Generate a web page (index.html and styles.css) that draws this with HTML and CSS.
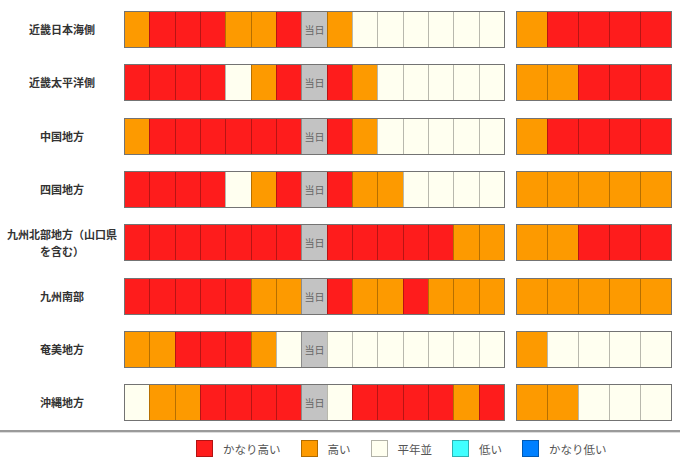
FILE: index.html
```html
<!DOCTYPE html>
<html lang="ja">
<head>
<meta charset="utf-8">
<link rel="stylesheet" href="styles.css">
</head>
<body>
<div class="rows">
  <div class="row">
    <div class="label">近畿日本海側</div>
    <div class="bar main"><i class="o"></i><i class="r"></i><i class="r"></i><i class="r"></i><i class="o"></i><i class="o"></i><i class="r"></i><i class="t">当日</i><i class="o"></i><i class="w"></i><i class="w"></i><i class="w"></i><i class="w"></i><i class="w"></i><i class="w"></i></div>
    <div class="bar side"><i class="o"></i><i class="r"></i><i class="r"></i><i class="r"></i><i class="r"></i></div>
  </div>
  <div class="row">
    <div class="label">近畿太平洋側</div>
    <div class="bar main"><i class="r"></i><i class="r"></i><i class="r"></i><i class="r"></i><i class="w"></i><i class="o"></i><i class="r"></i><i class="t">当日</i><i class="r"></i><i class="o"></i><i class="w"></i><i class="w"></i><i class="w"></i><i class="w"></i><i class="w"></i></div>
    <div class="bar side"><i class="o"></i><i class="o"></i><i class="r"></i><i class="r"></i><i class="r"></i></div>
  </div>
  <div class="row">
    <div class="label">中国地方</div>
    <div class="bar main"><i class="o"></i><i class="r"></i><i class="r"></i><i class="r"></i><i class="r"></i><i class="r"></i><i class="r"></i><i class="t">当日</i><i class="r"></i><i class="o"></i><i class="w"></i><i class="w"></i><i class="w"></i><i class="w"></i><i class="w"></i></div>
    <div class="bar side"><i class="o"></i><i class="r"></i><i class="r"></i><i class="r"></i><i class="r"></i></div>
  </div>
  <div class="row">
    <div class="label">四国地方</div>
    <div class="bar main"><i class="r"></i><i class="r"></i><i class="r"></i><i class="r"></i><i class="w"></i><i class="o"></i><i class="r"></i><i class="t">当日</i><i class="r"></i><i class="o"></i><i class="o"></i><i class="w"></i><i class="w"></i><i class="w"></i><i class="w"></i></div>
    <div class="bar side"><i class="o"></i><i class="o"></i><i class="o"></i><i class="o"></i><i class="o"></i></div>
  </div>
  <div class="row">
    <div class="label">九州北部地方（山口県<br>を含む）</div>
    <div class="bar main"><i class="r"></i><i class="r"></i><i class="r"></i><i class="r"></i><i class="r"></i><i class="r"></i><i class="r"></i><i class="t">当日</i><i class="r"></i><i class="r"></i><i class="r"></i><i class="r"></i><i class="r"></i><i class="o"></i><i class="o"></i></div>
    <div class="bar side"><i class="o"></i><i class="o"></i><i class="r"></i><i class="r"></i><i class="r"></i></div>
  </div>
  <div class="row">
    <div class="label">九州南部</div>
    <div class="bar main"><i class="r"></i><i class="r"></i><i class="r"></i><i class="r"></i><i class="r"></i><i class="o"></i><i class="o"></i><i class="t">当日</i><i class="r"></i><i class="o"></i><i class="o"></i><i class="r"></i><i class="o"></i><i class="o"></i><i class="o"></i></div>
    <div class="bar side"><i class="o"></i><i class="o"></i><i class="o"></i><i class="o"></i><i class="o"></i></div>
  </div>
  <div class="row">
    <div class="label">奄美地方</div>
    <div class="bar main"><i class="o"></i><i class="o"></i><i class="r"></i><i class="r"></i><i class="r"></i><i class="o"></i><i class="w"></i><i class="t">当日</i><i class="w"></i><i class="w"></i><i class="w"></i><i class="w"></i><i class="w"></i><i class="w"></i><i class="w"></i></div>
    <div class="bar side"><i class="o"></i><i class="w"></i><i class="w"></i><i class="w"></i><i class="w"></i></div>
  </div>
  <div class="row">
    <div class="label">沖縄地方</div>
    <div class="bar main"><i class="w"></i><i class="o"></i><i class="o"></i><i class="r"></i><i class="r"></i><i class="r"></i><i class="r"></i><i class="t">当日</i><i class="w"></i><i class="r"></i><i class="r"></i><i class="r"></i><i class="r"></i><i class="o"></i><i class="r"></i></div>
    <div class="bar side"><i class="o"></i><i class="o"></i><i class="w"></i><i class="w"></i><i class="w"></i></div>
  </div>
</div>
<div class="legend">
  <span class="item"><b class="sw r"></b>かなり高い</span>
  <span class="item"><b class="sw o"></b>高い</span>
  <span class="item"><b class="sw w"></b>平年並</span>
  <span class="item"><b class="sw c"></b>低い</span>
  <span class="item"><b class="sw b"></b>かなり低い</span>
</div>
</body>
</html>
```

FILE: styles.css
```css
html, body {
  margin: 0;
  padding: 0;
  background: #ffffff;
}
body {
  width: 680px;
  height: 468px;
  overflow: hidden;
  font-family: "Noto Sans CJK JP", "Noto Sans", sans-serif;
}
.rows {
  display: flex;
  flex-direction: column;
  gap: 16.33px;
  padding-top: 11px;
}
.row {
  display: flex;
  align-items: stretch;
  height: 37px;
}
.label {
  width: 126px;
  flex: none;
  display: flex;
  align-items: center;
  justify-content: center;
  text-align: center;
  font-size: 11px;
  line-height: 17px;
  font-weight: bold;
  color: #333333;
  margin-left: -1px;
  margin-right: -1px;
}
.bar {
  display: flex;
  box-sizing: border-box;
  border: 1px solid rgba(0, 0, 0, 0.55);
  flex: none;
}
.bar.main {
  width: 381px;
}
.bar.side {
  width: 156px;
  margin-left: 11px;
}
.bar i {
  flex: 1 1 0;
  font-style: normal;
  border-left: 1px solid rgba(0, 0, 0, 0.28);
  display: flex;
  align-items: center;
  justify-content: center;
  font-size: 10px;
  color: #666666;
}
.bar i:first-child {
  border-left: none;
}
.r { background: #fe1c1c; }
.o { background: #fd9a00; }
.w { background: #fffff0; }
.t { background: #c3c3c3; }
.c { background: #40ffff; }
.b { background: #0080ff; }
.legend {
  margin-top: 8.7px;
  border-top: 2px solid #9a9a9a;
  box-shadow: 0 1px 0 #dcdcdc inset;
  display: flex;
  align-items: center;
  padding-left: 196px;
  padding-top: 8px;
  height: 18px;
  font-size: 11.5px;
  color: #555555;
}
.item {
  display: flex;
  align-items: center;
  margin-right: 20px;
}
.sw {
  display: block;
  width: 17px;
  height: 17px;
  box-sizing: border-box;
  border: 1px solid rgba(0, 0, 0, 0.3);
  margin-right: 10px;
}
```
